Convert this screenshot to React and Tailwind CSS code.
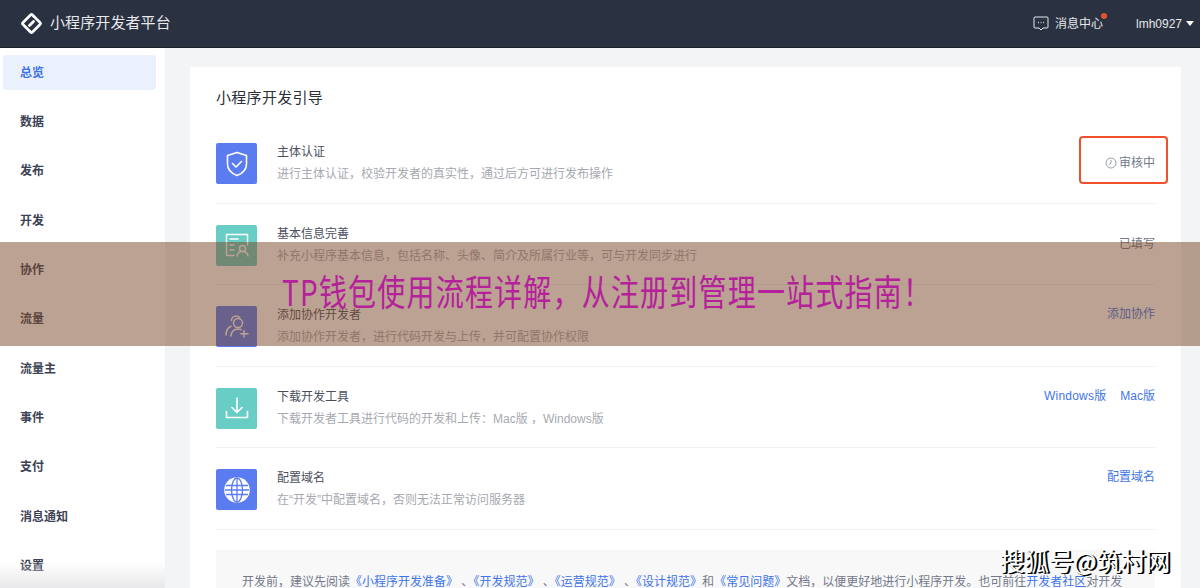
import React from "react";

const FONT = "font-['Liberation_Sans','Noto_Sans_CJK_SC',sans-serif]";

const MENU = ["总览", "数据", "发布", "开发", "协作", "流量", "流量主", "事件", "支付", "消息通知", "设置"];

const ShieldIcon = () => (
  <svg width="22" height="26" viewBox="0 0 22 26" fill="none" stroke="white" strokeWidth="1.6" strokeLinecap="round" strokeLinejoin="round">
    <path d="M11 1.500 20.500 4.500V13c0 5.500-4 9.500-9.500 11.500C5.500 22.500 1.500 18.500 1.500 13V4.500Z" />
    <path d="M6.500 12.500 10 16l5.500-5.500" />
  </svg>
);

const InfoIcon = () => (
  <svg width="24" height="25" viewBox="0 0 24 25" fill="none" stroke="white" strokeWidth="1.5" strokeLinecap="round" strokeLinejoin="round">
    <path d="M9 22.500H1.500V1.500H22.500V12" />
    <path d="M5 6H13M5 12H9M5 17H9" />
    <circle cx="17.500" cy="15.500" r="3" />
    <path d="M12 23c.5-3 2.500-4.500 5.500-4.500S22.500 20 23 23" />
  </svg>
);

const UsersIcon = () => (
  <svg width="24" height="23" viewBox="0 0 24 23" fill="none" stroke="white" strokeWidth="1.5" strokeLinecap="round" strokeLinejoin="round">
    <circle cx="13" cy="8" r="4.500" />
    <path d="M6.500 5.500C6.500 3 8.500 1 11 1c1.500 0 2.800.6 3.700 1.600" />
    <path d="M1 20c0-4.500 2-7.500 5-8.800" />
    <path d="M6 21c.5-4.500 3-7 7-7 1.200 0 2.300.2 3.200.7" />
    <path d="M19 15.500v6.500M15.800 18.800H23" />
  </svg>
);

const DownloadIcon = () => (
  <svg width="24" height="24" viewBox="0 0 24 24" fill="none" stroke="white" strokeWidth="1.600" strokeLinecap="round" strokeLinejoin="round">
    <path d="M12 2V16M7 11.500 12 16.500 17 11.500" />
    <path d="M1.500 15.500V21.500H22.500V15.500" />
  </svg>
);

const GlobeIcon = () => (
  <svg width="26" height="26" viewBox="0 0 26 26" fill="white" stroke="#5b7cf0" strokeWidth="1.300">
    <circle cx="13" cy="13" r="12.800" stroke="none" />
    <ellipse cx="13" cy="13" rx="5.500" ry="12" fill="none" />
    <path d="M13 1V25M2 8.500H24M1 13H25M2 17.500H24" fill="none" />
  </svg>
);

const STEPS = [
  { title: "主体认证", desc: "进行主体认证，校验开发者的真实性，通过后方可进行发布操作", bg: "bg-[#5b7cf0]", icon: <ShieldIcon />, statusPad: "pt-[12px]" },
  { title: "基本信息完善", desc: "补充小程序基本信息，包括名称、头像、简介及所属行业等，可与开发同步进行", bg: "bg-[#68cdc5]", icon: <InfoIcon />, statusPad: "pt-[11px]" },
  { title: "添加协作开发者", desc: "添加协作开发者，进行代码开发与上传，并可配置协作权限", bg: "bg-[#5b7cf0]", icon: <UsersIcon />, statusPad: "pt-0" },
  { title: "下载开发工具", desc: "下载开发者工具进行代码的开发和上传：Mac版 ，Windows版", bg: "bg-[#68cdc5]", icon: <DownloadIcon />, statusPad: "pt-0" },
  { title: "配置域名", desc: "在“开发”中配置域名，否则无法正常访问服务器", bg: "bg-[#5b7cf0]", icon: <GlobeIcon />, statusPad: "pt-0" },
];

const Status = ({ index }) => {
  if (index === 0) {
    return (
      <span className="flex items-center gap-[2px] text-[#73798a]">
        <svg width="12" height="12" viewBox="0 0 12 12" fill="none" stroke="#8d93a1" strokeWidth="0.900">
          <circle cx="6" cy="6" r="5" />
          <path d="M6 3V6.200L3.800 7.600" />
        </svg>
        审核中
      </span>
    );
  }
  if (index === 1) return <span className="text-[#73798a]">已填写</span>;
  if (index === 2) return <span className="text-[#3f74e8]">添加协作</span>;
  if (index === 3) {
    return (
      <span className="flex gap-[14px] text-[#3f74e8]">
        <span className="tracking-[0.200px]">Windows版</span>
        <span>Mac版</span>
      </span>
    );
  }
  return <span className="text-[#3f74e8]">配置域名</span>;
};

export default function App() {
  return (
    <div className={`relative flex h-[588px] w-[1200px] flex-col overflow-hidden bg-[#f3f4f6] ${FONT}`}>
      {/* 헤더 */}
      <header className="flex h-[48px] shrink-0 items-center justify-between border-b border-[#1b2029] bg-[#2a3141] pl-[20px] pr-[6px] text-white">
        <div className="flex items-center gap-[7px]">
          <svg width="23" height="23" viewBox="0 0 23 23" fill="none" stroke="white" strokeWidth="2.600" strokeLinecap="round" strokeLinejoin="round">
            <path d="M13.500 4 12.500 3Q11.500 2 10.500 3L3 10.500Q2 11.500 3 12.500L9.500 19" />
            <path d="M9.500 19 10.500 20Q11.500 21 12.500 20L20 12.500Q21 11.500 20 10.500L13.500 4" />
            <path d="M9.500 13.500 13.500 9.500" strokeWidth="2.800" />
          </svg>
          <span className="text-[15px] tracking-[0.100px] text-[#e6e8ec]">小程序开发者平台</span>
        </div>
        <div className="flex items-center text-[12px] text-[#e6e8ec]">
          <svg width="16" height="15" viewBox="0 0 16 15" fill="none" stroke="#e6e8ec" strokeWidth="1">
            <path d="M2 1H14Q15 1 15 2V11Q15 12 14 12H10L8 14 6 12H2Q1 12 1 11V2Q1 1 2 1Z" />
            <path d="M5 6.500H5.800M7.700 6.500H8.500M10.300 6.500H11.100" strokeWidth="1.300" />
          </svg>
          <span className="relative ml-[6px]">
            消息中心
            <span className="absolute right-[-4px] top-[-2px] h-[6px] w-[6px] rounded-full bg-[#e8502a]" />
          </span>
          <span className="ml-[33px]">lmh0927</span>
          <span className="ml-[4px] h-0 w-0 border-x-[4px] border-t-[5px] border-x-transparent border-t-white" />
        </div>
      </header>

      <div className="flex min-h-0 flex-1">
        {/* 사이드바 */}
        <aside className="w-[165px] shrink-0 bg-white px-[3px] pt-[7px] text-[12px] font-semibold text-[#3c4354]">
          <div className="flex w-[153px] flex-col gap-[14.350px]">
            {MENU.map((item, idx) => (
              <div
                key={item}
                className={`flex h-[35px] shrink-0 items-center rounded-[3px] pl-[17px] ${idx === 0 ? "bg-[#ebf1fc] text-[#3f74e8]" : ""}`}
              >
                {item}
              </div>
            ))}
          </div>
        </aside>

        {/* 본문 */}
        <main className="min-w-0 flex-1 pl-[25px] pr-[19px] pt-[19px]">
          <div className="h-[600px] bg-white pl-[26px] pr-[26px]">
            <h1 className="pt-[21px] text-[15px] leading-[19px] tracking-[0.300px] text-[#2a2f3a]">小程序开发引导</h1>
            <div className="mt-[15px]">
              {STEPS.map((step, idx) => (
                <div key={step.title} className="flex h-[81.500px] items-start border-b border-[#f0f1f3] pt-[21px] text-[12px]">
                  <div className={`flex h-[41px] w-[41px] shrink-0 items-center justify-center rounded-[2px] ${step.bg}`}>
                    {step.icon}
                  </div>
                  <div className="ml-[20px] flex-1 pt-[1px]">
                    <div className="leading-[16px] text-[#4a4f5c]">{step.title}</div>
                    <div className="mt-[6px] leading-[16px] text-[#a6a9b0]">{step.desc}</div>
                  </div>
                  <div className={`leading-[16px] ${step.statusPad}`}>
                    <Status index={idx} />
                  </div>
                </div>
              ))}
            </div>
            <div className="mt-[20px] h-[80px] bg-[#f8f8f9] px-[26px] pt-[23px] text-[12px] leading-[18px] text-[#73798a]">
              开发前，建议先阅读<span className="text-[#3f74e8]">《小程序开发准备》</span> 、<span className="text-[#3f74e8]">《开发规范》</span> 、<span className="text-[#3f74e8]">《运营规范》</span> 、<span className="text-[#3f74e8]">《设计规范》</span>和<span className="text-[#3f74e8]">《常见问题》</span>文档，以便更好地进行小程序开发。也可前往<span className="text-[#3f74e8]">开发者社区</span>对开发
            </div>
          </div>
        </main>
      </div>

      {/* 빨간 강조 박스 */}
      <div className="absolute left-[1079px] top-[136px] h-[48px] w-[89px] rounded-[4px] border-2 border-[#f0502a]" />

      {/* 사이드바 하단 페이드 */}
      <div className="absolute bottom-0 left-0 h-[26px] w-[165px] bg-gradient-to-b from-transparent to-[#e8e8ea]" />

      {/* 배너 */}
      <div className="absolute inset-x-0 top-[242px] flex h-[104px] items-center bg-[#774525]/50 pb-[6px] pl-[282px]">
        <span className="origin-left scale-y-[1.28] whitespace-nowrap text-[28px] font-normal leading-none tracking-[1.200px] text-[#b5219a] font-['Noto_Sans_CJK_SC',sans-serif]">
          TP钱包使用流程详解，从注册到管理一站式指南！
        </span>
      </div>

      {/* 워터마크 */}
      <div className="absolute left-[1000px] top-[546px] whitespace-nowrap text-[24.500px] font-normal leading-[30px] text-white [text-shadow:1px_1px_0_#000,2px_1px_0_#000] font-['Noto_Sans_CJK_SC',sans-serif]">
        搜狐号@筑村网
      </div>
    </div>
  );
}
